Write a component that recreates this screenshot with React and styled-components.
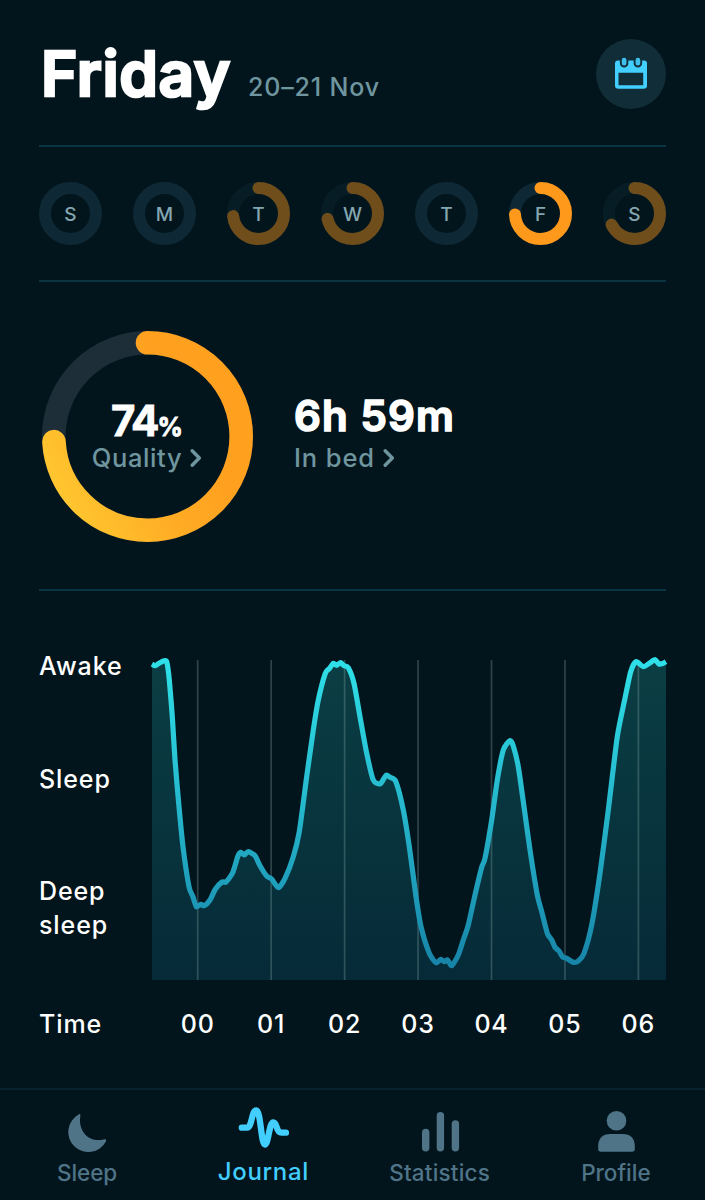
import { useState } from "react";
import styled, { createGlobalStyle } from "styled-components";

const days = [
  { label: "S", value: 0 },
  { label: "M", value: 0 },
  { label: "T", value: 73.3 },
  { label: "W", value: 71.5 },
  { label: "T", value: 0 },
  { label: "F", value: 74.4 },
  { label: "S", value: 67.8 },
];

const hours = ["00", "01", "02", "03", "04", "05", "06"];

const points = [
  [0, 14], [3.3, 15.7], [8, 12.7], [13, 10.7], [15, 12.7], [17.3, 30], [20.3, 66.7], [23, 110],
  [27, 156.7], [31, 196.7], [37, 236.7], [40.7, 246], [44.3, 256.7], [48.7, 254.3], [52.3, 255.7],
  [58, 250], [63.3, 239.3], [70, 232], [74, 232], [80.7, 222.7], [85.7, 206.7], [88.7, 202.3],
  [92.3, 205], [96.3, 201.7], [103, 205.7], [108, 215.7], [114.7, 226], [119.7, 229], [126.3, 237.7],
  [133, 228.3], [141.3, 206.7], [147.3, 181.7], [154.7, 126.7], [161.3, 80], [166.3, 50],
  [173.3, 23.3], [177.3, 18.7], [181.3, 13.3], [184.7, 15.3], [188.7, 12.7], [192, 15.7],
  [196.3, 17.7], [202, 33.3], [208, 66.7], [214.7, 103.3], [221.3, 130], [228.3, 133.7],
  [234, 125.3], [238, 127.3], [243.7, 131.3], [251.3, 160], [257.3, 196.7], [264, 246.7],
  [269, 276.7], [277.3, 303.3], [284, 312.7], [288.7, 309.3], [292.3, 311.7], [295.7, 310],
  [299.7, 315.7], [306.3, 305], [311.3, 290], [316.3, 275], [323, 245], [329.7, 217.3],
  [333, 208.3], [339.7, 170], [345.3, 130], [351.3, 100], [358, 90.7], [361.3, 96],
  [366.3, 116.7], [372, 156.7], [378, 200], [385.3, 245], [389.7, 261.7], [395.3, 283.3],
  [399.7, 290], [403, 297.3], [407, 301], [410.7, 307], [414.7, 308.3], [421.3, 312.3],
  [426.3, 311], [432, 303.3], [439.7, 275], [448, 223.3], [456.3, 160], [465.3, 86.7],
  [473, 48.3], [478.7, 21.7], [484, 11.7], [491.3, 16.7], [497.3, 13.3], [503, 9.7],
  [507, 14], [511.3, 13.3], [514, 11.7],
];

// smooth line through all the samples
const toPath = (pts) => {
  let d = `M${pts[0][0]} ${pts[0][1]}`;
  for (let i = 0; i < pts.length - 1; i++) {
    const p0 = pts[i - 1] || pts[i];
    const p1 = pts[i];
    const p2 = pts[i + 1];
    const p3 = pts[i + 2] || p2;
    d += `C${p1[0] + (p2[0] - p0[0]) / 9} ${p1[1] + (p2[1] - p0[1]) / 9} ${p2[0] - (p3[0] - p1[0]) / 9} ${p2[1] - (p3[1] - p1[1]) / 9} ${p2[0]} ${p2[1]}`;
  }
  return d;
};

const line = toPath(points);

const Ring = ({ size, width, value, track, color, children }) => {
  const r = (size - width) / 2;
  const c = size / 2;
  return (
    <svg width={size} height={size} viewBox={`0 0 ${size} ${size}`} fill="none" strokeWidth={width}>
      {children}
      <circle cx={c} cy={c} r={r} stroke={track} />
      {value > 0 && (
        <circle
          cx={c}
          cy={c}
          r={r}
          stroke={color}
          strokeLinecap="round"
          pathLength="100"
          strokeDasharray={`${value} 100`}
          transform={`rotate(-90 ${c} ${c})`}
        />
      )}
    </svg>
  );
};

const CalendarIcon = () => (
  <svg width="32" height="32" viewBox="0 0 32 32" overflow="visible">
    <path
      fill="#42ceff"
      fillRule="evenodd"
      d="M3 2.500H29Q32 2.500 32 5.500V27.500Q32 30.800 28.500 30.800H3.500Q0 30.800 0 27.500V5.500Q0 2.500 3 2.500ZM3.500 14.700V27.300H28.200V14.700Z"
    />
    <rect x="5.800" y="-1.300" width="6.600" height="9.800" rx="3.300" fill="#3fbfec" stroke="#112d38" strokeWidth="1.900" />
    <rect x="19.600" y="-1.300" width="6.600" height="9.800" rx="3.300" fill="#3fbfec" stroke="#112d38" strokeWidth="1.900" />
  </svg>
);

const Chevron = () => (
  <svg width="12" height="20" viewBox="0 0 12 20" fill="none" stroke="currentColor" strokeWidth="3.4" strokeLinecap="round" strokeLinejoin="round">
    <path d="M2.200 2.800L9.300 10L2.200 17.200" />
  </svg>
);

const MoonIcon = () => (
  <svg width="52" height="48" viewBox="0 0 52 48" fill="currentColor">
    <path d="M17.600 8.600C18.800 7.600 19.700 8.200 19.300 10.200C17 24 27 37 42.600 33.400C44.800 32.800 45.600 33.800 44.900 35.600A20 20 0 1 1 17.600 8.600Z" />
  </svg>
);

const PulseIcon = () => (
  <svg width="52" height="48" viewBox="0 0 52 48" fill="none" stroke="currentColor" strokeWidth="6.300" strokeLinecap="round" strokeLinejoin="round">
    <path d="M4.800 21.700H10C15 21.700 14.500 4.500 19.200 4.500S24 38.500 27.800 38.500S32 16.300 36.300 16.300S38.500 26.700 44.500 26.700H49" />
  </svg>
);

const BarsIcon = () => (
  <svg width="52" height="48" viewBox="0 0 52 48" fill="currentColor">
    <rect x="8" y="22.700" width="7.400" height="22.800" rx="3.700" />
    <rect x="22.700" y="6" width="7.400" height="39.500" rx="3.700" />
    <rect x="37.700" y="14.300" width="7.400" height="31.200" rx="3.700" />
  </svg>
);

const ProfileIcon = () => (
  <svg width="52" height="48" viewBox="0 0 52 48" fill="currentColor">
    <circle cx="26.500" cy="14.700" r="9.800" />
    <path d="M20.500 28H32.500Q44.800 28 44.800 40.500V43Q44.800 45.700 42 45.700H11Q8.200 45.700 8.200 43V40.500Q8.200 28 20.500 28Z" />
  </svg>
);

const tabs = [
  { name: "Sleep", icon: MoonIcon, spacing: "-0.1px" },
  { name: "Journal", icon: PulseIcon, spacing: "0.7px" },
  { name: "Statistics", icon: BarsIcon, spacing: "0.2px" },
  { name: "Profile", icon: ProfileIcon, spacing: "0" },
];

const App = () => {
  const [tab, setTab] = useState("Journal");
  const [day, setDay] = useState(5);

  return (
    <>
      <GlobalStyle />
      <Screen>
        <Content>
          <Header>
            <Title>Friday</Title>
            <DateRange>20–21 Nov</DateRange>
            <CalendarButton aria-label="Calendar">
              <CalendarIcon />
            </CalendarButton>
          </Header>

          <Week>
            {days.map((d, i) => (
              <Day key={i} onClick={() => setDay(i)}>
                <DayRing $dim={d.value > 0 && i !== day}>
                  <Ring size={63} width={12} value={d.value} track="#0e2935" color="#ff991c" />
                </DayRing>
                <DayLabel>{d.label}</DayLabel>
              </Day>
            ))}
          </Week>

          <Summary>
            <Quality>
              <Ring size={211} width={23.6} value={74.1} track="#1e2e39" color="url(#quality)">
                <defs>
                  {/* the ring is rotated a quarter turn, and the gradient with it */}
                  <linearGradient id="quality" x1="0.2" y1="0" x2="0.6" y2="0.75">
                    <stop offset="0" stopColor="#ffc730" />
                    <stop offset="0.6" stopColor="#ffab24" />
                    <stop offset="1" stopColor="#ffa01f" />
                  </linearGradient>
                </defs>
              </Ring>
              <QualityText>
                <Percent>
                  74<small>%</small>
                </Percent>
                <Link $spacing="0.6px">
                  Quality <Chevron />
                </Link>
              </QualityText>
            </Quality>
            <InBed>
              <Duration>6h 59m</Duration>
              <Link $spacing="0.9px">
                In bed <Chevron />
              </Link>
            </InBed>
          </Summary>

          <Phases>
            <Levels>
              <Level>Awake</Level>
              <Level>Sleep</Level>
              <Level>
                Deep
                <br />
                sleep
              </Level>
            </Levels>
            <Graph width="514" height="331" viewBox="0 0 514 331" fill="none">
              <defs>
                <linearGradient id="line" gradientUnits="userSpaceOnUse" x1="0" y1="10" x2="0" y2="316">
                  <stop offset="0" stopColor="#2fe0e8" />
                  <stop offset="0.5" stopColor="#25b5cb" />
                  <stop offset="1" stopColor="#1784a8" />
                </linearGradient>
                <linearGradient id="area" gradientUnits="userSpaceOnUse" x1="0" y1="10" x2="0" y2="331">
                  <stop offset="0" stopColor="#0b3e44" />
                  <stop offset="0.5" stopColor="#08343d" />
                  <stop offset="1" stopColor="#062a38" />
                </linearGradient>
              </defs>
              <path d={`${line}V330H0Z`} fill="url(#area)" />
              {hours.map((h, i) => (
                <path key={h} d={`M${45.7 + i * 73.45} 10V330`} stroke="#8fb0b0" strokeOpacity="0.3" strokeWidth="1.7" />
              ))}
              <path d={line} stroke="url(#line)" strokeWidth="5.200" strokeLinejoin="round" />
            </Graph>
          </Phases>

          <TimeRow>
            <Level>Time</Level>
            <Hours>
              {hours.map((h) => (
                <Hour key={h}>{h}</Hour>
              ))}
            </Hours>
          </TimeRow>
        </Content>

        <TabBar>
          {tabs.map(({ name, icon: Icon, spacing }) => (
            <Tab key={name} $active={tab === name} $spacing={spacing} onClick={() => setTab(name)}>
              <Icon />
              <span>{name}</span>
            </Tab>
          ))}
        </TabBar>
      </Screen>
    </>
  );
};

export default App;

const GlobalStyle = createGlobalStyle`
  * {
    box-sizing: border-box;
  }
  body {
    margin: 0;
    background: #03151c;
    font-family: Inter, "Open Sans", sans-serif;
  }
  svg {
    display: block;
    flex: none;
  }
  button {
    border: 0;
    padding: 0;
    background: none;
    color: inherit;
    font: inherit;
    cursor: pointer;
  }
`;

const Screen = styled.div`
  display: flex;
  flex-direction: column;
  width: 705px;
  height: 1200px;
  background: #03151c;
  color: #fff;
`;
const Content = styled.main`
  flex: 1;
  padding: 0 39px;
`;
const Header = styled.header`
  display: flex;
  align-items: flex-start;
  height: 147px;
  border-bottom: 2px solid #0c3341;
`;
const Title = styled.h1`
  margin: 0;
  width: 209px;
  padding: 35px 0 0 2px;
  font-size: 62px;
  font-weight: 600;
  line-height: 78px;
  letter-spacing: 0.6px;
  white-space: nowrap;
  -webkit-text-stroke: 2.6px #fff;
  stroke-linejoin: round;
`;
const DateRange = styled.span`
  padding-top: 70px;
  color: #6f959f;
  font-size: 25px;
  font-weight: 500;
  line-height: 34px;
  letter-spacing: 0.85px;
`;
const CalendarButton = styled.button`
  display: flex;
  align-items: center;
  justify-content: center;
  width: 70px;
  height: 70px;
  margin: 39px 0 0 auto;
  border-radius: 50%;
  background: #112d38;
`;
const Week = styled.div`
  display: flex;
  justify-content: space-between;
  height: 135px;
  padding-top: 35px;
  border-bottom: 2px solid #0c3341;
`;
const Day = styled.button`
  display: grid;
  place-items: center;
  width: 63px;
  height: 63px;
  & > * {
    grid-area: 1 / 1;
  }
`;
const DayRing = styled.span`
  opacity: ${({ $dim }) => ($dim ? 0.43 : 1)};
`;
const DayLabel = styled.span`
  padding-top: 2px;
  color: #83a6b1;
  font-size: 19px;
  font-weight: 500;
  line-height: 24px;
`;
const Summary = styled.section`
  display: flex;
  height: 309px;
  padding: 49px 0 0 2.5px;
  border-bottom: 2px solid #0c3341;
`;
const Quality = styled.div`
  display: grid;
  width: 210.5px;
  height: 211px;
  & > * {
    grid-area: 1 / 1;
  }
`;
const QualityText = styled.div`
  display: flex;
  flex-direction: column;
  align-items: center;
  padding-top: 65px;
`;
const Percent = styled.div`
  height: 44px;
  font-size: 42px;
  font-weight: 700;
  line-height: 50px;
  letter-spacing: -2px;
  -webkit-text-stroke: 0.8px #fff;
  small {
    font-size: 25px;
    letter-spacing: 0;
  }
`;
const Link = styled.button`
  display: flex;
  align-items: center;
  gap: 8px;
  color: #6f959f;
  font-size: 25.5px;
  font-weight: 500;
  line-height: 36px;
  letter-spacing: ${({ $spacing }) => $spacing};
`;
const InBed = styled.div`
  padding: 60px 0 0 42px;
`;
const Duration = styled.div`
  height: 49px;
  font-size: 42px;
  font-weight: 600;
  line-height: 50px;
  letter-spacing: 1.1px;
  white-space: nowrap;
  -webkit-text-stroke: 1.6px #fff;
`;
const Phases = styled.section`
  display: flex;
  padding-top: 59px;
`;
const Levels = styled.div`
  display: flex;
  flex-direction: column;
  gap: 78.5px;
  width: 113px;
  margin-top: -1px;
`;
const Level = styled.div`
  font-size: 25px;
  font-weight: 500;
  line-height: 34px;
  letter-spacing: 0.9px;
`;
const Graph = styled.svg`
  overflow: visible;
`;
const TimeRow = styled.div`
  display: flex;
  justify-content: space-between;
  padding-top: 26px;
`;
const Hours = styled.div`
  display: flex;
  width: 515px;
  margin-right: -10px;
`;
const Hour = styled.span`
  width: 73.45px;
  font-size: 25px;
  font-weight: 500;
  line-height: 34px;
  letter-spacing: 0.8px;
  text-align: center;
`;
const TabBar = styled.nav`
  display: flex;
  height: 112px;
  border-top: 2px solid #082230;
`;
const Tab = styled.button`
  display: flex;
  flex-direction: column;
  align-items: center;
  width: 176.5px;
  padding: 16px 2px 0 0;
  color: ${({ $active }) => ($active ? "#42ceff" : "#4f7488")};
  font-size: ${({ $active }) => ($active ? 24 : 22.5)}px;
  font-weight: 500;
  line-height: ${({ $active }) => ($active ? 35 : 37)}px;
  letter-spacing: ${({ $spacing }) => $spacing};
`;
